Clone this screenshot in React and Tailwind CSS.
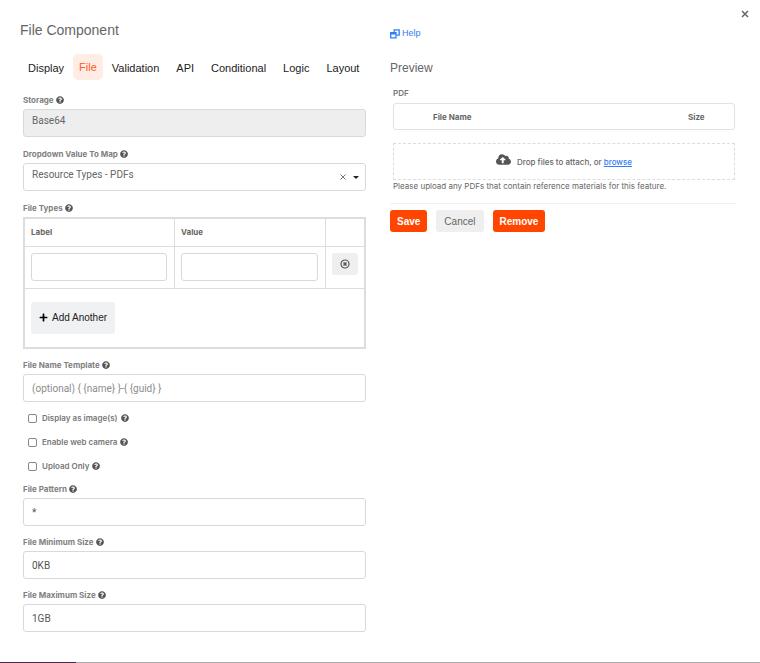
import { FaCloudUploadAlt, FaPlus, FaQuestionCircle } from 'react-icons/fa';

const tabs = ['Display', 'File', 'Validation', 'API', 'Conditional', 'Logic', 'Layout'];

const options = [
  { id: 'display-image', label: 'Display as image(s)' },
  { id: 'web-camera', label: 'Enable web camera' },
  { id: 'upload-only', label: 'Upload Only' },
];

const inputClass =
  "block w-full h-7 px-2 rounded-[3px] border border-[#d9d9d9] bg-white font-['Roboto',sans-serif] text-[10px] text-[#555] placeholder:text-[#8c8c8c]";

function FieldLabel({ htmlFor, children }) {
  return (
    <label htmlFor={htmlFor} className="flex items-center gap-[2px] mb-[3px] font-['Inter',sans-serif] text-[8px] leading-3 font-bold text-[#808080]">
      {children}
      <FaQuestionCircle size={8} className="text-[#555]" />
    </label>
  );
}

function TextField({ id, label, ...props }) {
  return (
    <div>
      <FieldLabel htmlFor={id}>{label}</FieldLabel>
      <input id={id} type="text" className={inputClass} {...props} />
    </div>
  );
}

function HelpIcon() {
  return (
    <svg width="10" height="10" viewBox="0 0 10 10" fill="none" stroke="currentColor">
      <path d="M4.200 4V.8h5v5.400H6.500" strokeWidth="1.300" />
      <path d="M.7 3.600h5.300v5.200H.7z" strokeWidth="1.300" />
      <path d="M.7 4.500h5.300" strokeWidth="2" />
    </svg>
  );
}

function RemoveIcon() {
  return (
    <svg width="10" height="10" viewBox="0 0 10 10" fill="none" stroke="currentColor">
      <circle cx="5" cy="5" r="4" strokeWidth="1.200" />
      <path d="M3.500 3.500l3 3M6.500 3.500l-3 3" strokeWidth="1.500" />
    </svg>
  );
}

function FileTypesTable() {
  return (
    <div>
      <FieldLabel htmlFor="type-label">File Types</FieldLabel>
      <table className="w-full table-fixed border-collapse border-2 border-[#ddd] text-[8px]">
        <colgroup>
          <col />
          <col />
          <col className="w-10" />
        </colgroup>
        <thead>
          <tr className="h-7 text-left font-['Inter',sans-serif] text-[#666]">
            <th className="pl-[6px] pr-[7px] font-bold border border-[#ddd]">Label</th>
            <th className="pl-[6px] pr-[7px] font-bold border border-[#ddd]">Value</th>
            <th className="border border-[#ddd]" />
          </tr>
        </thead>
        <tbody>
          <tr className="h-[42px]">
            <td className="pl-[6px] pr-[7px] border border-[#ddd]">
              <input id="type-label" type="text" aria-label="Label" className={inputClass} />
            </td>
            <td className="pl-[6px] pr-[7px] border border-[#ddd]">
              <input type="text" aria-label="Value" className={inputClass} />
            </td>
            <td className="px-[6px] pt-[6px] align-top border border-[#ddd]">
              <button type="button" aria-label="Remove row" className="flex items-center justify-center w-full h-[22px] rounded-[3px] bg-[#efefef] text-[#555]">
                <RemoveIcon />
              </button>
            </td>
          </tr>
          <tr className="h-[60px]">
            <td colSpan={3} className="px-[6px] border border-[#ddd]">
              <button type="button" className="flex items-center gap-1 h-8 px-2 rounded-[3px] bg-[#f0f1f3] text-[10px] text-[#222]">
                <FaPlus size={9} className="text-black" />
                Add Another
              </button>
            </td>
          </tr>
        </tbody>
      </table>
    </div>
  );
}

function SettingsForm() {
  return (
    <form className="pl-[3px] pt-[14px]">
      <div className="flex flex-col gap-[11px]">
        <div>
          <FieldLabel htmlFor="storage">Storage</FieldLabel>
          <select id="storage" disabled className="block appearance-none w-full h-7 px-2 pb-[6px] rounded-[3px] border border-[#d9d9d9] bg-[#eee] font-['Roboto',sans-serif] text-[10px] text-[#666] opacity-100">
            <option>Base64</option>
          </select>
        </div>
        <div>
          <FieldLabel htmlFor="dropdown-value">Dropdown Value To Map</FieldLabel>
          <div className="flex items-center h-7 pr-[6px] rounded-[3px] border border-[#d9d9d9] bg-white">
            <select id="dropdown-value" className="appearance-none flex-1 h-full px-2 pb-[6px] font-['Roboto',sans-serif] text-[10px] text-[#666]">
              <option>Resource Types - PDFs</option>
            </select>
            <button type="button" aria-label="Clear" className="text-[#777]">
              <svg width="6" height="6" viewBox="0 0 6 6" stroke="currentColor" fill="none">
                <path d="M.5.5l5 5M5.500.5l-5 5" />
              </svg>
            </button>
            <svg width="6" height="3" viewBox="0 0 6 3" className="ml-[7px] fill-[#222]">
              <path d="M0 0h6L3 3z" />
            </svg>
          </div>
        </div>
        <FileTypesTable />
      </div>
      <div className="flex flex-col gap-[10px] mt-[10px]">
        <TextField id="name-template" label="File Name Template" placeholder="(optional) { {name} }-{ {guid} }" />
        <div className="flex flex-col gap-3 mb-px pl-[5px]">
          {options.map((o) => (
            <div key={o.id} className="flex items-center h-3">
              <input id={o.id} type="checkbox" className="appearance-none size-[9px] rounded-[2px] border border-[#888] bg-white" />
              <label htmlFor={o.id} className="flex items-center gap-[3px] ml-[5px] font-['Inter',sans-serif] text-[8px] leading-3 font-semibold text-[#777]">
                {o.label}
                <FaQuestionCircle size={8} className="text-[#555]" />
              </label>
            </div>
          ))}
        </div>
        <TextField id="pattern" label="File Pattern" defaultValue="*" />
        <TextField id="min-size" label="File Minimum Size" defaultValue="0KB" />
        <TextField id="max-size" label="File Maximum Size" defaultValue="1GB" />
      </div>
    </form>
  );
}

function Preview() {
  return (
    <section className="pt-[28px]">
      <a href="#help" className="flex items-center gap-[2px] h-3 text-[9px] text-[#2f80f7]">
        <HelpIcon />
        Help
      </a>
      <div className="mt-[20px] pb-[11px] border-b border-[#f0f0f0]">
        <h2 className="text-[12px] leading-4 text-[#666]">Preview</h2>
        <div className="pl-[3px] pr-px font-['Inter',sans-serif] text-[8px] text-[#666]">
          <p className="mt-[11px] leading-3 font-semibold text-[#777]">PDF</p>
          <div className="mt-1 rounded-[3px] border border-[#e2e2e2]">
            <table className="w-full text-left">
              <thead>
                <tr className="h-[25px]">
                  <th className="w-[39px]" />
                  <th className="font-bold">File Name</th>
                  <th className="w-[46px] font-bold">Size</th>
                </tr>
              </thead>
            </table>
          </div>
          <div className="flex items-center justify-center gap-[6px] h-[37px] mt-[13px] border border-dashed border-[#ddd] font-medium text-[#666]">
            <FaCloudUploadAlt size={15} className="mb-1 text-[#555]" />
            <span>
              Drop files to attach, or <a href="#browse" className="text-[#2f80f7] underline">browse</a>
            </span>
          </div>
          <p className="leading-3">Please upload any PDFs that contain reference materials for this feature.</p>
        </div>
      </div>
      <div className="flex gap-[9px] mt-[6px] text-[10px]">
        <button type="button" className="h-[22px] px-[7px] rounded-[3px] bg-[#ff4500] font-bold text-white">Save</button>
        <button type="button" className="h-[22px] px-2 rounded-[3px] bg-[#efefef] text-[#666]">Cancel</button>
        <button type="button" className="h-[22px] px-[7px] rounded-[3px] bg-[#ff4500] font-bold text-white">Remove</button>
      </div>
    </section>
  );
}

export default function App() {
  return (
    <div className="relative flex flex-col min-h-screen bg-white font-['Liberation_Sans',Arial,sans-serif]">
      <button type="button" aria-label="Close" className="absolute top-[10px] right-[11px] text-[#666]">
        <svg width="8" height="8" viewBox="0 0 8 8" stroke="currentColor" strokeWidth="1.5" fill="none">
          <path d="M1 1l6 6M7 1L1 7" />
        </svg>
      </button>
      <main className="grid grid-cols-2 gap-6 flex-1 pl-5 pr-6">
        <section className="pt-5">
          <h1 className="text-[14px] leading-5 text-[#666]">File Component</h1>
          <nav className="flex gap-px mt-[14px] text-[11px] text-[#222]">
            {tabs.map((tab) => (
              <a
                key={tab}
                href={`#${tab.toLowerCase()}`}
                className={tab === 'File' ? 'h-[26px] px-[6px] leading-[26px] rounded-[5px] bg-[#ffece5] text-[#ff5a1f]' : 'h-[26px] px-2 leading-7'}
              >
                {tab}
              </a>
            ))}
          </nav>
          <SettingsForm />
        </section>
        <Preview />
      </main>
      <div className="flex h-px bg-[#aaa]">
        <span className="w-1/10 bg-[#4a2a45]" />
      </div>
    </div>
  );
}
